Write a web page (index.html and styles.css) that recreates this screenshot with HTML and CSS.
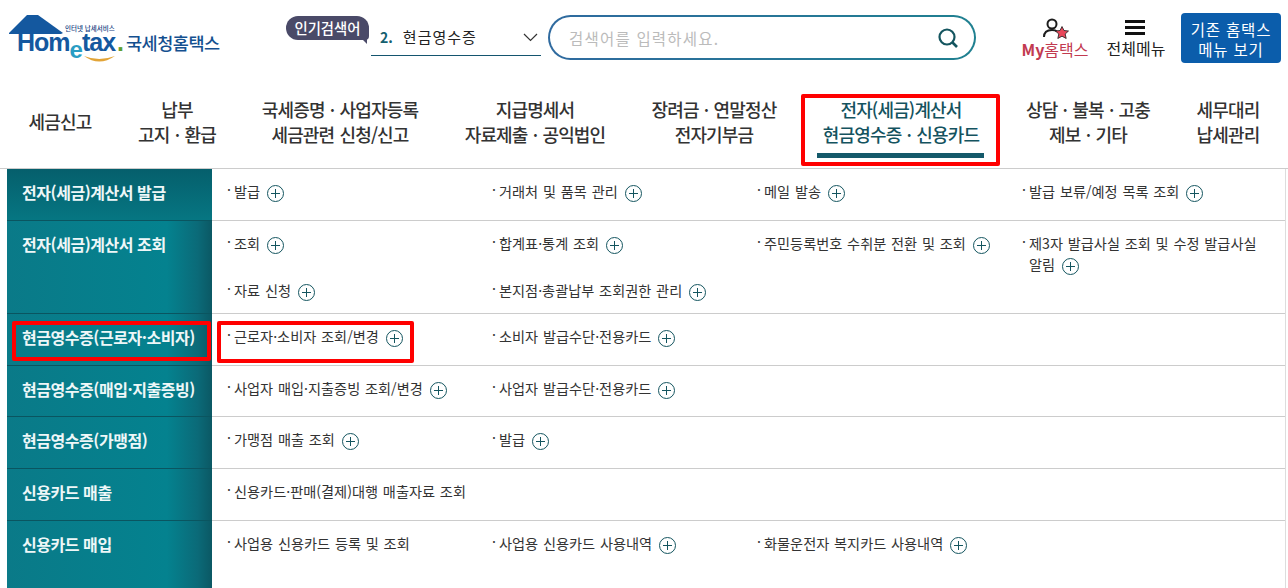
FILE: index.html
```html
<!DOCTYPE html>
<html lang="ko">
<head>
    <meta charset="UTF-8">
    <title>국세청 홈택스</title>
    <link rel="stylesheet" href="styles.css">
</head>
<body>
    <header class="top">
        <a class="logo">
            <svg class="logo-house" width="54" height="19" viewBox="0 0 54 19">
                <path d="M0 18 L18 0 L29 0 L54 18 L52 19 L0 19 Z" fill="#14589f"/>
            </svg>
            <span class="logo-small">인터넷 납세서비스</span>
            <span class="logo-en">Hom<span class="logo-e">e</span>tax<span class="logo-dot">.</span></span>
            <svg class="logo-smile" width="31" height="8" viewBox="0 0 31 8">
                <path d="M0 0 Q15 11 31 0 Q15 6 0 0 Z" fill="#e2a437"/>
            </svg>
            <span class="logo-kr">국세청홈택스</span>
        </a>

        <div class="popular">
            <span class="popular-tag">인기검색어</span>
            <div class="popular-select">
                <b>2.</b><span>현금영수증</span>
                <svg width="15" height="9" viewBox="0 0 15 9"><path d="M1 1 L7.500 7.500 L14 1" fill="none" stroke="#333" stroke-width="1.2"/></svg>
            </div>
        </div>

        <div class="search">
            <span>검색어를 입력하세요.</span>
            <svg width="22" height="22" viewBox="0 0 22 22"><circle cx="10" cy="10" r="7.500" fill="none" stroke="#14555f" stroke-width="2.2"/><path d="M15.500 15.500 L20 20" stroke="#14555f" stroke-width="2.6"/></svg>
        </div>

        <a class="top-link my">
            <svg width="27" height="21" viewBox="0 0 27 21">
                <circle cx="9" cy="6" r="4.500" fill="none" stroke="#1d1d1d" stroke-width="2"/>
                <path d="M1 19 C1 14 4 12 9 12 C11 12 13 12.500 14 13.500" fill="none" stroke="#1d1d1d" stroke-width="2"/>
                <path d="M19 8.500 L21 12.500 L25.500 13 L22.200 16 L23.200 20.500 L19 18.200 L14.800 20.500 L15.800 16 L12.500 13 L17 12.500 Z" fill="#e8475a" stroke="#1d1d1d" stroke-width=".8"/>
            </svg>
            <span><b>My</b>홈택스</span>
        </a>
        <a class="top-link all">
            <span class="burger"><i></i><i></i><i></i></span>
            <span>전체메뉴</span>
        </a>
        <a class="old-btn">기존 홈택스<br>메뉴 보기</a>
    </header>

    <nav class="gnb">
        <a>세금신고</a>
        <a>납부<br>고지 · 환급</a>
        <a>국세증명 · 사업자등록<br>세금관련 신청/신고</a>
        <a>지급명세서<br>자료제출 · 공익법인</a>
        <a>장려금 · 연말정산<br>전자기부금</a>
        <a class="on">전자(세금)계산서<br>현금영수증 · 신용카드</a>
        <a>상담 · 불복 · 고충<br>제보 · 기타</a>
        <a>세무대리<br>납세관리</a>
    </nav>

    <main class="menu">
        <section class="row">
            <h2>전자(세금)계산서 발급</h2>
            <ul>
                <li>발급<i class="plus"></i></li>
                <li>거래처 및 품목 관리<i class="plus"></i></li>
                <li>메일 발송<i class="plus"></i></li>
                <li>발급 보류/예정 목록 조회<i class="plus"></i></li>
            </ul>
        </section>
        <section class="row tall">
            <h2>전자(세금)계산서 조회</h2>
            <ul>
                <li>조회<i class="plus"></i></li>
                <li>합계표·통계 조회<i class="plus"></i></li>
                <li>주민등록번호 수취분 전환 및 조회<i class="plus"></i></li>
                <li>제3자 발급사실 조회 및 수정 발급사실 알림<i class="plus"></i></li>
                <li>자료 신청<i class="plus"></i></li>
                <li>본지점·총괄납부 조회권한 관리<i class="plus"></i></li>
            </ul>
        </section>
        <section class="row">
            <h2>현금영수증(근로자·소비자)</h2>
            <ul>
                <li>근로자·소비자 조회/변경<i class="plus"></i></li>
                <li>소비자 발급수단·전용카드<i class="plus"></i></li>
            </ul>
        </section>
        <section class="row short">
            <h2>현금영수증(매입·지출증빙)</h2>
            <ul>
                <li>사업자 매입·지출증빙 조회/변경<i class="plus"></i></li>
                <li>사업자 발급수단·전용카드<i class="plus"></i></li>
            </ul>
        </section>
        <section class="row">
            <h2>현금영수증(가맹점)</h2>
            <ul>
                <li>가맹점 매출 조회<i class="plus"></i></li>
                <li>발급<i class="plus"></i></li>
            </ul>
        </section>
        <section class="row">
            <h2>신용카드 매출</h2>
            <ul>
                <li class="wide">신용카드·판매(결제)대행 매출자료 조회</li>
            </ul>
        </section>
        <section class="row last">
            <h2>신용카드 매입</h2>
            <ul>
                <li>사업용 신용카드 등록 및 조회</li>
                <li>사업용 신용카드 사용내역<i class="plus"></i></li>
                <li>화물운전자 복지카드 사용내역<i class="plus"></i></li>
            </ul>
        </section>
    </main>

    <!-- 빨간 표시 박스 -->
    <div class="mark mark-nav"></div>
    <div class="mark mark-side"></div>
    <div class="mark mark-item"></div>
</body>
</html>
```

FILE: styles.css
```css
* {
    box-sizing: border-box;
}
body {
    margin: 0;
    position: relative;
    height: 588px;
    overflow: hidden;
    background: #fff;
    color: #222;
    font-family: "Noto Sans CJK KR", "Noto Sans", sans-serif;
}

/* top */
.top {
    height: 85px;
    display: flex;
    align-items: flex-start;
}
.logo {
    position: relative;
    display: block;
    width: 285px;
    height: 70px;
    flex: none;
}
.logo-house {
    position: absolute;
    left: 9px;
    top: 15px;
}
.logo-small {
    position: absolute;
    left: 65px;
    top: 24px;
    font-size: 6.500px;
    line-height: 8px;
    font-weight: 500;
    color: #14407f;
    white-space: nowrap;
}
.logo-en {
    position: absolute;
    left: 17px;
    top: 32px;
    font-family: "Liberation Sans", sans-serif;
    font-weight: 700;
    font-size: 25px;
    line-height: 20px;
    letter-spacing: -1px;
    color: #14589f;
    white-space: nowrap;
}
.logo-e {
    position: relative;
    top: 7px;
    color: #2a9dc4;
    font-size: 24px;
}
.logo-dot {
    color: #5f9e2f;
    margin-left: 2px;
}
.logo-smile {
    position: absolute;
    left: 84px;
    top: 56px;
}
.logo-kr {
    position: absolute;
    left: 126px;
    top: 31px;
    font-size: 17.500px;
    line-height: 24px;
    font-weight: 500;
    letter-spacing: -.5px;
    color: #14508f;
    white-space: nowrap;
}

.popular {
    position: relative;
    width: 256px;
    height: 60px;
    flex: none;
}
.popular-tag {
    position: absolute;
    left: 1px;
    top: 16px;
    width: 83px;
    height: 24px;
    border-radius: 12px 12px 4px 12px;
    background: #4a4a68;
    color: #fff;
    font-size: 14.400px;
    font-weight: 500;
    line-height: 23px;
    text-align: center;
}
.popular-tag::after {
    content: "";
    position: absolute;
    right: 2px;
    top: 23px;
    border-top: 5px solid #4a4a68;
    border-left: 5px solid transparent;
}
.popular-select {
    position: absolute;
    left: 86px;
    top: 18px;
    width: 170px;
    height: 38px;
    padding: 0 3px 0 9px;
    display: flex;
    align-items: center;
    border-bottom: 1px solid #14556f;
    font-size: 15px;
    color: #222;
}
.popular-select span {
    letter-spacing: 1px;
}
.popular-select b {
    color: #14606f;
    font-size: 14px;
    margin-right: 10px;
}
.popular-select svg {
    margin-left: auto;
    margin-top: 2px;
}
.search {
    width: 428px;
    height: 45px;
    margin: 15px 0 0 7px;
    flex: none;
    padding: 0 15px 0 19px;
    display: flex;
    align-items: center;
    justify-content: space-between;
    border: 2px solid transparent;
    border-radius: 23px;
    background: linear-gradient(#fff, #fff) padding-box, linear-gradient(90deg, #2f6a9f, #1f8090) border-box;
    font-size: 15.500px;
    letter-spacing: 1.200px;
    color: #bbb;
}
.top-link {
    display: flex;
    flex-direction: column;
    align-items: center;
    flex: none;
    font-size: 16px;
    line-height: 20px;
    white-space: nowrap;
}
.my {
    width: 70px;
    margin: 18px 0 0 44px;
    color: #c23a50;
}
.my svg {
    margin-left: 2px;
}
.my b {
    font-weight: 700;
}
.all {
    width: 60px;
    margin: 20px 0 0 16px;
}
.burger {
    display: flex;
    flex-direction: column;
    gap: 3.500px;
    width: 20px;
    margin: 0 2px 3px 0;
}
.burger i {
    display: block;
    height: 2.500px;
    background: #111;
}
.old-btn {
    width: 100px;
    height: 50px;
    margin: 13px 0 0 15px;
    flex: none;
    background: #0b5dab;
    border-radius: 4px;
    color: #fff;
    font-size: 15.500px;
    letter-spacing: .8px;
    line-height: 20px;
    text-align: center;
    padding-top: 6px;
}

/* gnb */
.gnb {
    height: 84px;
    display: grid;
    grid-template-columns: 106px 128px 198px 192px 166px 208px 166px 114px;
    border-bottom: 1px solid #ccc;
    padding-left: 7px;
}
.gnb a {
    display: flex;
    align-items: center;
    justify-content: center;
    text-align: center;
    height: 73px;
    font-size: 18px;
    font-weight: 500;
    line-height: 25px;
    letter-spacing: -.85px;
    word-spacing: 1px;
    color: #333;
    position: relative;
    white-space: nowrap;
}
.gnb a.on {
    color: #14535f;
}
.gnb a.on::after {
    content: "";
    position: absolute;
    left: 20px;
    right: 21px;
    top: 68px;
    height: 5px;
    background: #14596a;
}

/* menu table */
.menu {
    margin-left: 7px;
    margin-right: 2px;
    border-right: 1px solid #ddd;
}
.row {
    display: flex;
    min-height: 52px;
    border-bottom: 1px solid #ccc;
}
.row.short {
    min-height: 51px;
}
.row.tall {
    min-height: 93px;
}
.row.last {
    min-height: 68px;
    border-bottom: none;
}
.row h2 {
    flex: none;
    width: 205px;
    margin: 0;
    padding: 11px 0 0 15px;
    font-size: 16px;
    line-height: 24px;
    font-weight: 700;
    letter-spacing: -.45px;
    color: #eef7f8;
    background: linear-gradient(90deg, #0a7a88 0%, #04828f 78%, #0b6a78 93%, #0b5864 100%);
    box-shadow: 0 1px 0 #0a5560;
    white-space: nowrap;
}
.row:first-child h2 {
    background: linear-gradient(180deg, #055f6c 0%, #067682 100%);
}
.row ul {
    flex: 1;
    margin: 0;
    padding: 12px 0 0 15px;
    list-style: none;
    display: grid;
    grid-template-columns: repeat(4, 265px);
    row-gap: 5px;
    align-content: start;
}
.row li {
    position: relative;
    padding: 0 16px 0 7px;
    font-size: 14.200px;
    line-height: 21px;
    word-spacing: .8px;
    word-break: keep-all;
    color: #333;
}
.row li::before {
    content: "·";
    position: absolute;
    left: 0;
    top: -2px;
}
.row li.wide {
    grid-column: span 2;
}
.plus {
    display: inline-block;
    position: relative;
    width: 17px;
    height: 17px;
    margin-left: 7px;
    vertical-align: -5px;
    border: 1px solid #14555f;
    border-radius: 50%;
}
.plus::before, .plus::after {
    content: "";
    position: absolute;
    background: #14555f;
}
.plus::before {
    left: 3px;
    width: 9px;
    top: 7px;
    height: 1px;
}
.plus::after {
    top: 3px;
    height: 9px;
    left: 7px;
    width: 1px;
}

/* red marks */
.mark {
    position: absolute;
    border: 4px solid #f00;
    border-radius: 2px;
}
.mark-nav {
    left: 801px;
    top: 94px;
    width: 199px;
    height: 72px;
}
.mark-side {
    left: 12px;
    top: 321px;
    width: 199px;
    height: 40px;
}
.mark-item {
    left: 217px;
    top: 321px;
    width: 197px;
    height: 42px;
}
```
